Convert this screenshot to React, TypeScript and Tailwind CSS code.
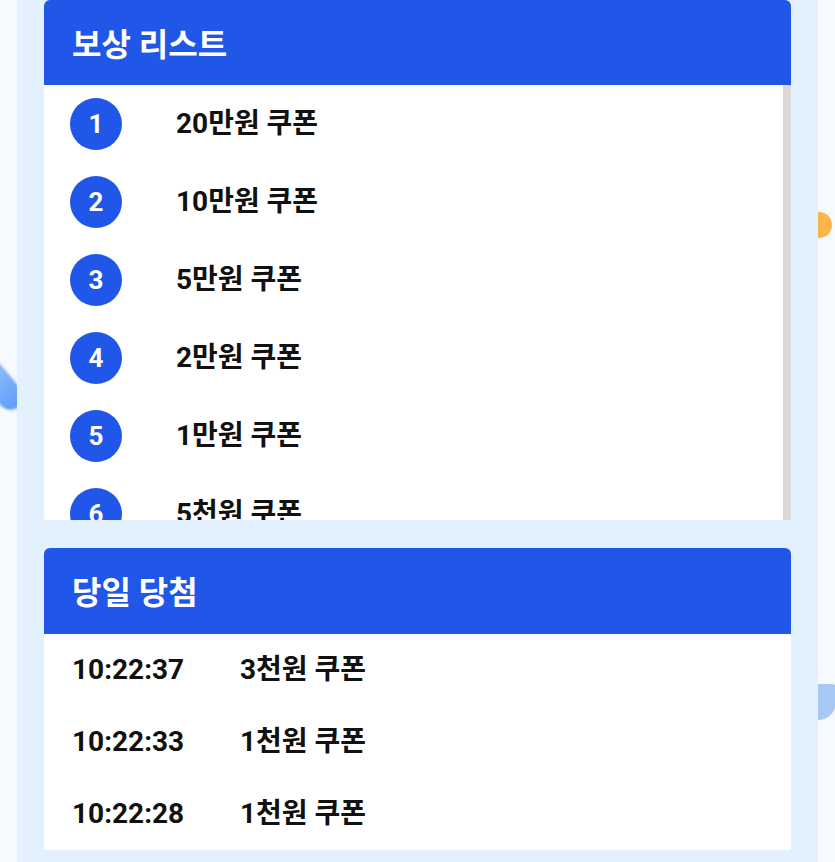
import React from 'react';

const rewards = ['20만원 쿠폰', '10만원 쿠폰', '5만원 쿠폰', '2만원 쿠폰', '1만원 쿠폰', '5천원 쿠폰'];

const winners = [
  { time: '10:22:37', prize: '3천원 쿠폰' },
  { time: '10:22:33', prize: '1천원 쿠폰' },
  { time: '10:22:28', prize: '1천원 쿠폰' },
];

const font = { fontFamily: "Roboto, 'Noto Sans CJK KR', sans-serif" };

const App: React.FC = () => {
  return (
    <div className="relative h-[862px] w-[835px] overflow-hidden bg-[#f6f9fe]" style={font}>
      {/* Background decorations */}
      <div className="absolute left-[-14px] top-[352px] h-[62px] w-[26px] rotate-[-40deg] rounded-full bg-gradient-to-b from-[#9cc4fa] to-[#5f9ff6] blur-[1px]" />
      <div className="absolute left-[806px] top-[212px] h-[26px] w-[26px] rounded-full bg-[#fdb54a]" />
      <div className="absolute left-[800px] top-[684px] h-[36px] w-[36px] rounded-[50%_4px_50%_50%] bg-[#a6c9f4]" />

      {/* Center panel */}
      <div className="relative z-10 mx-[17px] flex h-full flex-col gap-[28px] bg-[#e3f0fd] px-[27px]">
        {/* Reward list */}
        <section className="flex flex-col">
          <div className="flex h-[85px] items-center rounded-t-[6px] bg-[#2157e9] px-[28px] pt-[4px]">
            <h2 className="text-[32px] font-bold text-white">보상 리스트</h2>
          </div>
          <div className="flex h-[435px] bg-white">
            <ul className="flex-1 overflow-hidden">
              {rewards.map((label, i) => (
                <li key={label} className="flex h-[78px] shrink-0 items-center pl-[26px]">
                  <span className="flex h-[52px] w-[52px] items-center justify-center rounded-full bg-[#2157e9] text-[26px] font-bold text-white">
                    {i + 1}
                  </span>
                  <span className="ml-[54px] text-[28px] font-bold text-[#111]">{label}</span>
                </li>
              ))}
            </ul>
            <div className="w-[8px] bg-[#d9d9d9]" />
          </div>
        </section>

        {/* Today's winners */}
        <section className="flex flex-col">
          <div className="flex h-[86px] items-center rounded-t-[6px] bg-[#2157e9] px-[28px] pt-[4px]">
            <h2 className="text-[32px] font-bold text-white">당일 당첨</h2>
          </div>
          <ul className="bg-white px-[28px]">
            {winners.map((w) => (
              <li key={w.time} className="flex h-[72px] items-center text-[28px] font-bold text-[#111]">
                <span className="w-[168px]">{w.time}</span>
                <span>{w.prize}</span>
              </li>
            ))}
          </ul>
        </section>
      </div>
    </div>
  );
};

export default App;
